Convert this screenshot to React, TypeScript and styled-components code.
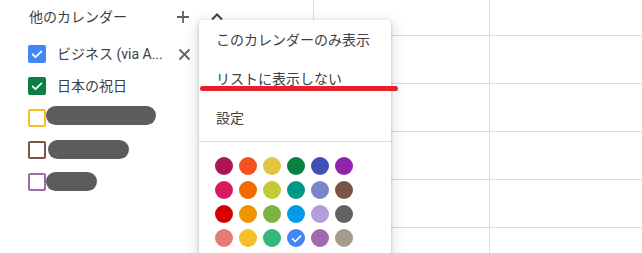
import React from "react";
import styled, { createGlobalStyle } from "styled-components";

const Global = createGlobalStyle`
  html, body { margin: 0; padding: 0; background: #fff; }
  body { width: 642px; height: 253px; overflow: hidden; font-family: Roboto, "Noto Sans CJK JP", sans-serif; }
  * { box-sizing: border-box; }
`;

const Page = styled.div`
  position: relative;
  display: flex;
  width: 642px;
  height: 253px;
  overflow: hidden;
`;

const Sidebar = styled.aside`
  flex: 0 0 313px;
  display: flex;
  flex-direction: column;
`;

const Header = styled.div`
  display: flex;
  align-items: center;
  height: 34px;
  padding-left: 29px;
`;

const HeaderLabel = styled.span`
  flex: 0 0 142px;
  font-size: 14px;
  color: #3c4043;
  line-height: 20px;
`;

const IconButton = styled.span<{ $gap?: number }>`
  display: flex;
  align-items: center;
  justify-content: center;
  width: 24px;
  height: 24px;
  margin-left: ${(p) => p.$gap ?? 0}px;
  color: #5f6368;
`;

const List = styled.div`
  display: flex;
  flex-direction: column;
  margin-top: 4px;
`;

const Row = styled.div`
  display: flex;
  align-items: center;
  height: 32px;
  padding-left: 28px;
`;

const Box = styled.span<{ $color: string; $checked?: boolean }>`
  flex: 0 0 18px;
  width: 18px;
  height: 18px;
  border-radius: 2px;
  display: flex;
  align-items: center;
  justify-content: center;
  background: ${(p) => (p.$checked ? p.$color : "#fff")};
  border: 2px solid ${(p) => p.$color};
`;

const Name = styled.span`
  flex: 0 0 115px;
  margin-left: 11px;
  font-size: 14px;
  color: #3c4043;
  white-space: nowrap;
  overflow: hidden;
  line-height: 20px;
`;

const Redacted = styled.span<{ $w: number; $dx: number; $dy: number }>`
  display: block;
  width: ${(p) => p.$w}px;
  height: 19px;
  border-radius: 10px;
  background: #5b5c5e;
  margin-left: ${(p) => p.$dx}px;
  transform: translateY(${(p) => p.$dy}px);
`;

const Main = styled.main`
  flex: 1;
  display: grid;
  grid-template-columns: repeat(3, 176px);
  grid-template-rows: 36px repeat(5, 48px);
  border-left: 1px solid #dadce0;
`;

const Cell = styled.div`
  border-right: 1px solid #dadce0;
  border-bottom: 1px solid #dadce0;
`;

const Menu = styled.div`
  position: absolute;
  left: 199px;
  top: 20px;
  width: 192px;
  height: 260px;
  background: #fff;
  border-radius: 4px;
  box-shadow: 0 4px 12px 3px rgba(60, 64, 67, 0.15), 0 1px 3px rgba(60, 64, 67, 0.3);
  z-index: 2;
`;

const MenuItem = styled.div`
  height: 39px;
  display: flex;
  align-items: center;
  padding-left: 17px;
  padding-bottom: 2px;
  font-size: 14px;
  color: #3c4043;
  white-space: nowrap;
`;

const Divider = styled.div`
  height: 1px;
  margin-top: 4px;
  background: #dadce0;
`;

const Palette = styled.div`
  display: grid;
  grid-template-columns: repeat(6, 18px);
  grid-auto-rows: 18px;
  gap: 6px;
  padding: 15px 0 0 16px;
`;

const Swatch = styled.span<{ $color: string }>`
  width: 18px;
  height: 18px;
  border-radius: 50%;
  background: ${(p) => p.$color};
  display: flex;
  align-items: center;
  justify-content: center;
`;

const Highlight = styled.div`
  position: absolute;
  left: 200px;
  top: 86px;
  width: 198px;
  height: 5px;
  border-radius: 3px;
  background: #e5202a;
  z-index: 3;
`;

const Check = ({ size = 14 }: { size?: number }) => (
  <svg width={size} height={size} viewBox="0 0 24 24">
    <path d="M4.5 12.5l5 5L19.5 7.5" fill="none" stroke="#fff" strokeWidth="3" strokeLinecap="round" strokeLinejoin="round" />
  </svg>
);

const Plus = () => (
  <svg width="14" height="14" viewBox="0 0 14 14">
    <path d="M7 1v12M1 7h12" stroke="#5f6368" strokeWidth="1.8" />
  </svg>
);

const Close = () => (
  <svg width="13" height="13" viewBox="0 0 13 13">
    <path d="M1.5 1.5l10 10M11.5 1.5l-10 10" stroke="#5f6368" strokeWidth="1.8" />
  </svg>
);

const ChevronUp = () => (
  <svg width="14" height="14" viewBox="0 0 14 14">
    <path d="M2 9.5L7 4.5l5 5" fill="none" stroke="#3c4043" strokeWidth="2" />
  </svg>
);

const colors = [
  "#ad1457", "#f4511e", "#e4c441", "#0b8043", "#3f51b5", "#8e24aa",
  "#d81b60", "#ef6c00", "#c0ca33", "#009688", "#7986cb", "#795548",
  "#d50000", "#f09300", "#7cb342", "#039be5", "#b39ddb", "#616161",
  "#e67c73", "#f6bf26", "#33b679", "#4285f4", "#9e69af", "#a79b8e",
];

const hidden = [
  { color: "#f6bf26", w: 110, dx: 0, dy: -3 },
  { color: "#795548", w: 81, dx: 2, dy: -1 },
  { color: "#9e69af", w: 51, dx: 0, dy: -1 },
];

export default function App() {
  return (
    <>
      <Global />
      <Page>
        <Sidebar>
          <Header>
            <HeaderLabel>他のカレンダー</HeaderLabel>
            <IconButton>
              <Plus />
            </IconButton>
            <IconButton $gap={10}>
              <ChevronUp />
            </IconButton>
          </Header>
          <List>
            <Row>
              <Box $color="#4285f4" $checked>
                <Check />
              </Box>
              <Name>ビジネス (via A...</Name>
              <IconButton>
                <Close />
              </IconButton>
            </Row>
            <Row>
              <Box $color="#0b8043" $checked>
                <Check />
              </Box>
              <Name>日本の祝日</Name>
            </Row>
            {hidden.map((h) => (
              <Row key={h.color}>
                <Box $color={h.color} />
                <Redacted $w={h.w} $dx={h.dx} $dy={h.dy} />
              </Row>
            ))}
          </List>
        </Sidebar>
        <Main>
          {Array.from({ length: 18 }).map((_, i) => (
            <Cell key={i} />
          ))}
        </Main>
        <Menu>
          <MenuItem>このカレンダーのみ表示</MenuItem>
          <MenuItem>リストに表示しない</MenuItem>
          <MenuItem>設定</MenuItem>
          <Divider />
          <Palette>
            {colors.map((c) => (
              <Swatch key={c} $color={c}>
                {c === "#4285f4" && <Check size={13} />}
              </Swatch>
            ))}
          </Palette>
        </Menu>
        <Highlight />
      </Page>
    </>
  );
}
